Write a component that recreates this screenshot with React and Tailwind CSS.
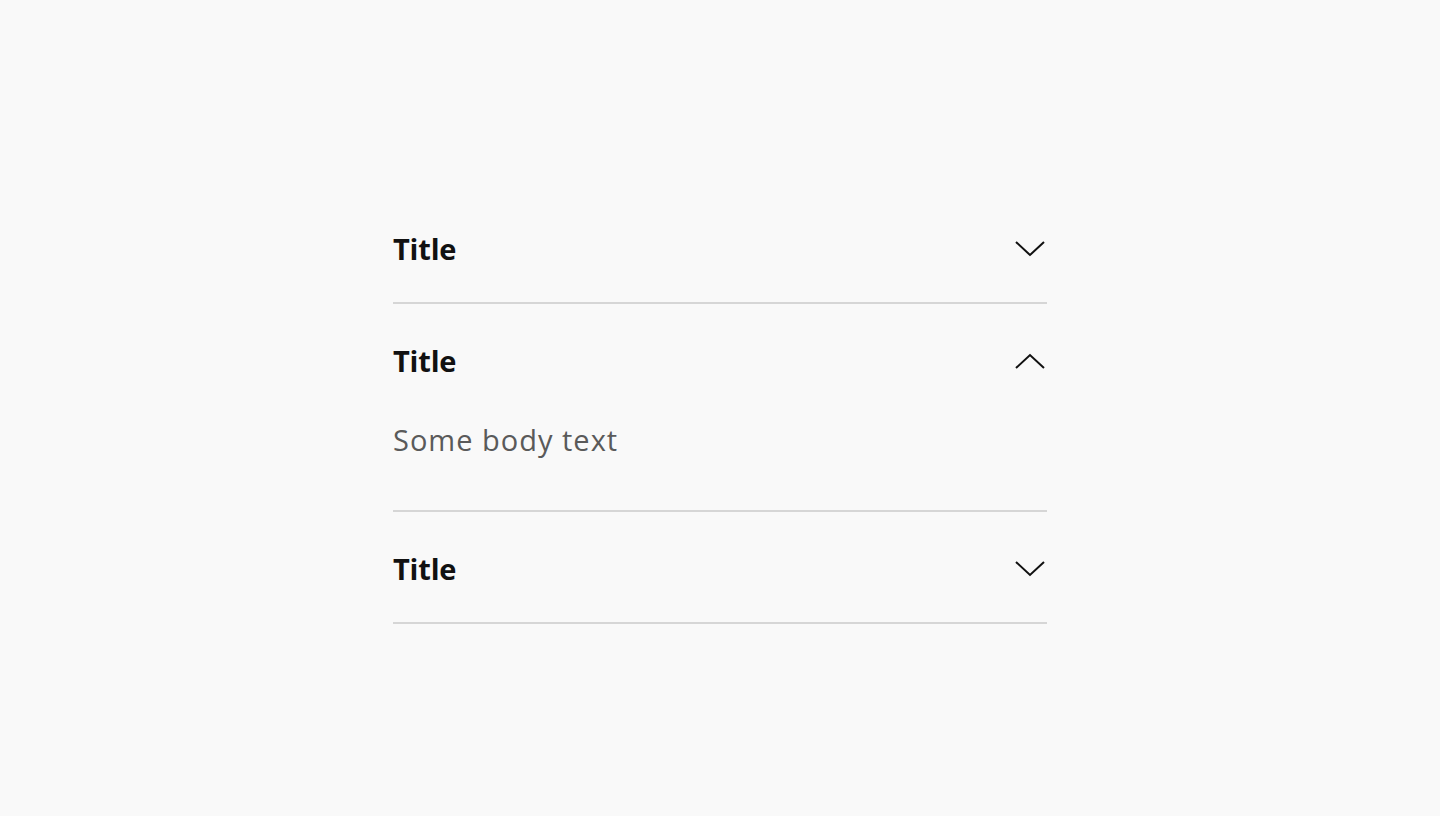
import { useState } from "react";

const items = [
  { id: 1, title: "Title", body: "Some body text" },
  { id: 2, title: "Title", body: "Some body text" },
  { id: 3, title: "Title", body: "Some body text" },
];

function Chevron({ up }) {
  return (
    <svg
      width="32"
      height="18"
      viewBox="0 0 32 18"
      fill="none"
      stroke="#111111"
      strokeWidth="2"
      className={up ? "rotate-180" : ""}
    >
      <path d="M2 2 L16 15 L30 2" />
    </svg>
  );
}

export default function App() {
  const [open, setOpen] = useState(2);

  return (
    <div className="min-h-screen bg-[#f9f9f9] pt-[192px] font-['Open_Sans',sans-serif]">
      <div className="w-[654px] ml-[393px]">
        {items.map((item) => {
          const isOpen = open === item.id;
          return (
            <div key={item.id} className="border-b-2 border-[#d6d6d6]">
              <button
                onClick={() => setOpen(isOpen ? null : item.id)}
                className="w-full flex items-center justify-between pt-[42px] pb-[38px] pr-[1px] text-left"
              >
                <span className="text-[29px] leading-[30px] font-bold text-[#111111] tracking-[-0.2px]">
                  {item.title}
                </span>
                <Chevron up={isOpen} />
              </button>
              {isOpen && (
                <p className="pt-[11px] pb-[55px] text-[29px] leading-[30px] font-normal text-[#5a5a5a] tracking-[1px]">
                  {item.body}
                </p>
              )}
            </div>
          );
        })}
      </div>
    </div>
  );
}
